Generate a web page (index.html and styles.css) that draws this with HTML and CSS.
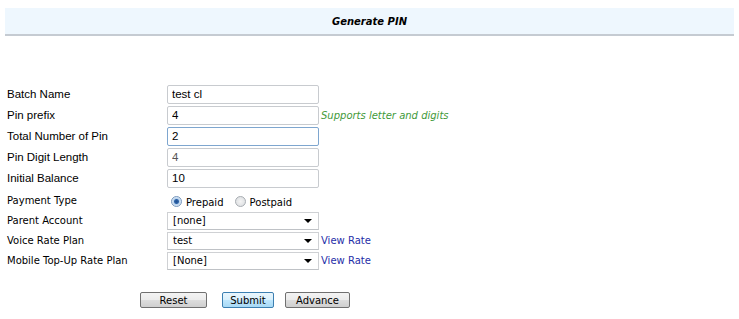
FILE: index.html
```html
<!DOCTYPE html>
<html lang="en">
<head>
  <meta charset="UTF-8" />
  <title>Generate PIN</title>
  <link rel="stylesheet" href="styles.css">
</head>
<body>
  <div class="title-bar">Generate PIN</div>

  <form id="pinForm" class="pin-form">
    <table class="form-table">
      <tr class="big">
        <td class="label">Batch Name</td>
        <td><input type="text" class="field" value="test cl" /></td>
      </tr>
      <tr class="big">
        <td class="label">Pin prefix</td>
        <td><input type="text" class="field" value="4" /><span class="hint">Supports letter and digits</span></td>
      </tr>
      <tr class="big">
        <td class="label">Total Number of Pin</td>
        <td><input type="text" class="field focused" value="2" /></td>
      </tr>
      <tr class="big">
        <td class="label">Pin Digit Length</td>
        <td><input type="text" class="field readonly" value="4" readonly /></td>
      </tr>
      <tr class="big">
        <td class="label">Initial Balance</td>
        <td><input type="text" class="field" value="10" /></td>
      </tr>
      <tr class="small radio-row">
        <td class="label">Payment Type</td>
        <td>
          <label class="radio"><span class="dot on"></span>Prepaid</label>
          <label class="radio"><span class="dot"></span>Postpaid</label>
        </td>
      </tr>
      <tr class="small">
        <td class="label">Parent Account</td>
        <td><div class="select">[none]<span class="arrow"></span></div></td>
      </tr>
      <tr class="small">
        <td class="label">Voice Rate Plan</td>
        <td><div class="select">test<span class="arrow"></span></div><a class="link" href="#">View Rate</a></td>
      </tr>
      <tr class="small">
        <td class="label">Mobile Top-Up Rate Plan</td>
        <td><div class="select">[None]<span class="arrow"></span></div><a class="link" href="#">View Rate</a></td>
      </tr>
    </table>

    <div class="buttons">
      <button type="reset" class="btn reset">Reset</button>
      <button type="submit" class="btn submit">Submit</button>
      <button type="button" class="btn advance">Advance</button>
    </div>
  </form>
</body>
</html>
```

FILE: styles.css
```css
body {
  margin: 0;
  background: #fff;
  color: #000;
  font-family: Tahoma, "DejaVu Sans", Verdana, sans-serif;
}
.title-bar {
  margin: 8px 5px 0;
  height: 26px;
  line-height: 27px;
  background: #eef7fe;
  border-bottom: 2px solid #c5cbd2;
  text-align: center;
  font-family: "DejaVu Sans", Verdana, sans-serif;
  font-size: 10px;
  font-weight: bold;
  font-style: italic;
}
.pin-form {
  margin: 47px 0 0 7px;
}
.form-table {
  border-collapse: collapse;
}
.form-table td {
  padding: 0;
  vertical-align: middle;
}
.label {
  width: 160px;
  white-space: nowrap;
}
.big td {
  height: 21px;
}
.big .label {
  font-family: "Liberation Sans", Arial, sans-serif;
  font-size: 11.5px;
}
.small td {
  height: 20px;
}
.small .label {
  font-family: "DejaVu Sans", Verdana, sans-serif;
  font-size: 10px;
}
.field {
  box-sizing: border-box;
  width: 152px;
  height: 19px;
  margin: 0;
  padding: 0 4px;
  border: 1px solid #c8cbcf;
  border-radius: 2px;
  font-family: "Liberation Sans", Arial, sans-serif;
  font-size: 11.5px;
  color: #000;
  vertical-align: middle;
}
.field.focused {
  border-color: #7ea6cf;
}
.field.readonly {
  color: #555;
}
.hint {
  margin-left: 2px;
  font-family: "DejaVu Sans", Verdana, sans-serif;
  font-size: 10px;
  font-style: italic;
  color: #3f9a3a;
  vertical-align: middle;
}
.radio-row td {
  height: 17px;
  padding-top: 3px;
}
.radio {
  font-family: "DejaVu Sans", Verdana, sans-serif;
  font-size: 10px;
  margin-right: 2px;
}
.dot {
  display: inline-block;
  box-sizing: border-box;
  width: 11px;
  height: 11px;
  margin: 0 4px 0 4px;
  border: 1px solid #a9aeb3;
  border-radius: 50%;
  background: radial-gradient(circle, #f4f4f4, #d8dbde);
  vertical-align: -1px;
}
.dot.on {
  background: radial-gradient(circle, #1e4f91 0, #2d63a8 2px, #b9d3ee 3px, #e4eef8 5px);
  border-color: #7b99bd;
}
.select {
  position: relative;
  display: inline-block;
  box-sizing: border-box;
  width: 152px;
  height: 18px;
  line-height: 16px;
  padding: 0 5px;
  border: 1px solid #cfd1d4;
  border-bottom-color: #bfc2c6;
  background: #fff;
  font-family: "DejaVu Sans", Verdana, sans-serif;
  font-size: 10px;
  vertical-align: middle;
}
.arrow {
  position: absolute;
  right: 6px;
  top: 6px;
  width: 0;
  height: 0;
  border-left: 4px solid transparent;
  border-right: 4px solid transparent;
  border-top: 4px solid #000;
}
.link {
  margin-left: 2px;
  font-family: "DejaVu Sans", Verdana, sans-serif;
  font-size: 10px;
  color: #1f2fa8;
  text-decoration: none;
  vertical-align: middle;
}
.buttons {
  margin: 22px 0 0 133px;
  display: flex;
}
.btn {
  box-sizing: border-box;
  height: 16px;
  padding: 0;
  border: 1px solid #707070;
  border-radius: 2px;
  background: linear-gradient(#f3f3f3 0, #ebebeb 50%, #dddddd 51%, #cfcfcf 100%);
  font-family: "DejaVu Sans", Verdana, sans-serif;
  font-size: 10px;
  color: #000;
}
.reset {
  width: 67px;
}
.submit {
  width: 52px;
  margin-left: 15px;
  border-color: #3c7fb1;
  background: linear-gradient(#eaf6fd 0, #d9f0fc 50%, #bee6fd 51%, #a7d9f5 100%);
}
.advance {
  width: 65px;
  margin-left: 11px;
}
```
